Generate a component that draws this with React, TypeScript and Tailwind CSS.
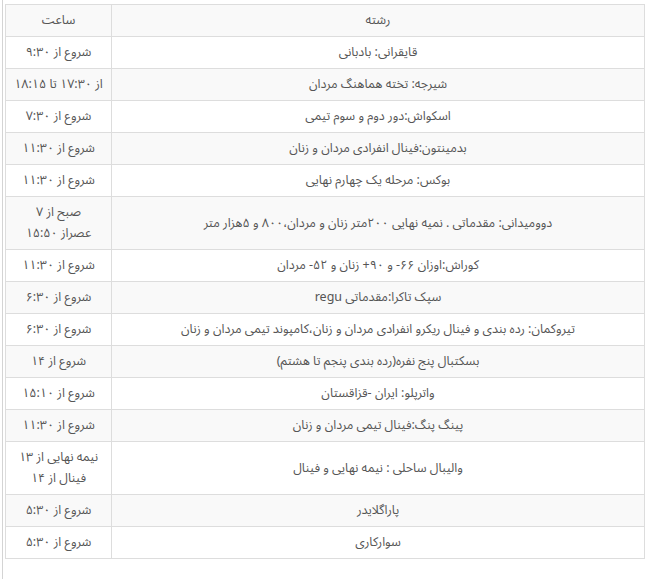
const ROWS: { sport: string; time: string[] }[] = [
  { sport: "قایقرانی: بادبانی", time: ["شروع از ۹:۳۰"] },
  { sport: "شیرجه: تخته هماهنگ مردان", time: ["از ۱۷:۳۰ تا ۱۸:۱۵"] },
  { sport: "اسکواش:دور دوم و سوم تیمی", time: ["شروع از ۷:۳۰"] },
  { sport: "بدمینتون:فینال انفرادی مردان و زنان", time: ["شروع از ۱۱:۳۰"] },
  { sport: "بوکس: مرحله یک چهارم نهایی", time: ["شروع از ۱۱:۳۰"] },
  { sport: "دوومیدانی: مقدماتی . نمیه نهایی ۲۰۰متر زنان و مردان،۸۰۰ و ۵هزار متر", time: ["صبح از ۷", "عصراز ۱۵:۵۰"] },
  { sport: "کوراش:اوزان ۶۶- و ۹۰+ زنان و ۵۲- مردان", time: ["شروع از ۱۱:۳۰"] },
  { sport: "سپک تاکرا:مقدماتی regu", time: ["شروع از ۶:۳۰"] },
  { sport: "تیروکمان: رده بندی و فینال ریکرو انفرادی مردان و زنان،کامپوند تیمی مردان و زنان", time: ["شروع از ۶:۳۰"] },
  { sport: "بسکتبال پنج نفره(رده بندی پنجم تا هشتم)", time: ["شروع از ۱۴"] },
  { sport: "واترپلو: ایران -قزاقستان", time: ["شروع از ۱۵:۱۰"] },
  { sport: "پینگ پنگ:فینال تیمی مردان و زنان", time: ["شروع از ۱۱:۳۰"] },
  { sport: "والیبال ساحلی : نیمه نهایی و فینال", time: ["نیمه نهایی از ۱۳", "فینال از ۱۴"] },
  { sport: "پاراگلایدر", time: ["شروع از ۵:۳۰"] },
  { sport: "سوارکاری", time: ["شروع از ۵:۳۰"] },
];

export default function App() {
  return (
    <div className="min-h-[579px] bg-white">
      <div className="ml-[2px] min-h-[579px] border-l border-[#d4d4d4] pl-[2px] pt-[4px]">
        <table
          dir="rtl"
          className="w-[640px] table-fixed border-collapse border border-[#dddddd] text-[12.5px] leading-[21px] text-[#555555]"
          style={{ fontFamily: '"Noto Sans Arabic", Vazirmatn, "DejaVu Sans", sans-serif' }}
        >
          <thead>
            <tr className="bg-[#f9f9f9]">
              <th className="border border-[#dddddd] px-2 py-[5px] text-center font-normal">رشته</th>
              <th className="w-[106px] border border-[#dddddd] px-1 py-[5px] text-center font-normal">ساعت</th>
            </tr>
          </thead>
          <tbody>
            {ROWS.map((r, i) => (
              <tr key={i} className={i % 2 === 1 ? "bg-[#f9f9f9]" : "bg-white"}>
                <td className="border border-[#dddddd] px-2 py-[5px] text-center">{r.sport}</td>
                <td className="whitespace-nowrap border border-[#dddddd] px-1 py-[5px] text-center">
                  {r.time.map((t, j) => (
                    <div key={j} className="h-[21px]">{t}</div>
                  ))}
                </td>
              </tr>
            ))}
          </tbody>
        </table>
      </div>
    </div>
  );
}
